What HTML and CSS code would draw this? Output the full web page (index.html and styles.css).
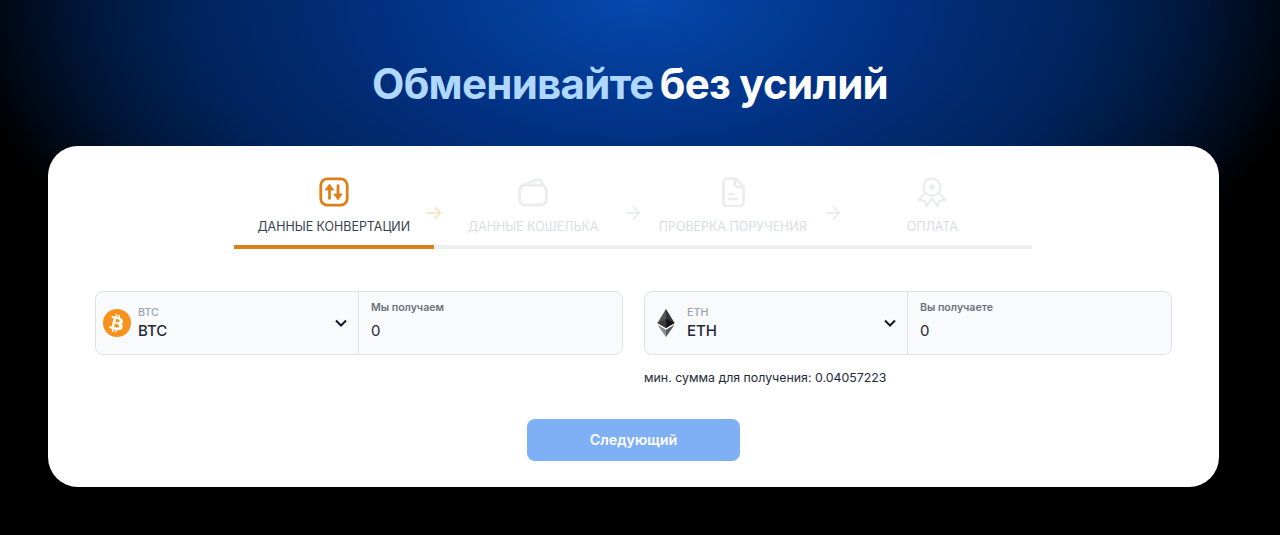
FILE: index.html
```html
<!DOCTYPE html>
<html lang="ru">
<head>
<meta charset="utf-8">
<title>Обменивайте без усилий</title>
<link rel="stylesheet" href="styles.css">
</head>
<body>
<main class="page">
  <h1 class="title"><span class="title-accent">Обменивайте</span> без усилий</h1>
  <section class="card">
    <ol class="steps">
      <li class="step step-active">
        <svg class="step-icon" viewBox="0 0 30 30" fill="none"><rect x="1.800" y="1.800" width="26.400" height="26.400" rx="6.500" stroke="#dc8119" stroke-width="2.800"/><path d="M10.500 22.500V12" stroke="#dc8119" stroke-width="2.800"/><path d="M10.500 7.200L14.600 13H6.400z" fill="#dc8119" stroke="#dc8119" stroke-linejoin="round"/><path d="M19 7.500V18" stroke="#dc8119" stroke-width="2.800"/><path d="M19 22.800L14.900 17h8.200z" fill="#dc8119" stroke="#dc8119" stroke-linejoin="round"/></svg>
        <span class="step-label">ДАННЫЕ КОНВЕРТАЦИИ</span>
        <svg class="step-arrow arrow-warm" viewBox="0 0 16 14" fill="none"><path d="M1 7h13.500M8.500 1l6 6-6 6" stroke="currentColor" stroke-width="1.400"/></svg>
      </li>
      <li class="step">
        <svg class="step-icon" viewBox="0 0 30 30" fill="none"><rect x="1.500" y="8" width="27" height="20" rx="6" stroke="#ebecee" stroke-width="2.800"/><path d="M2 13c0-3 1-4.500 4-5.300L18 3c3.500-1.200 6 .5 7 5" stroke="#ebecee" stroke-width="2.800"/></svg>
        <span class="step-label">ДАННЫЕ КОШЕЛЬКА</span>
        <svg class="step-arrow" viewBox="0 0 16 14" fill="none"><path d="M1 7h13.500M8.500 1l6 6-6 6" stroke="currentColor" stroke-width="1.400"/></svg>
      </li>
      <li class="step">
        <svg class="step-icon" viewBox="0 0 30 30" fill="none"><path d="M5.500 5.500a4 4 0 0 1 4-4h8l8 8.500v15.500a3.500 3.500 0 0 1-3.500 3.500H9a3.500 3.500 0 0 1-3.500-3.500z" stroke="#ebecee" stroke-width="2.600" stroke-linejoin="round"/><path d="M17 2v5a3 3 0 0 0 3 3h5.500M11 17h4M11 22h8" stroke="#ebecee" stroke-width="2.600" stroke-linecap="round"/></svg>
        <span class="step-label">ПРОВЕРКА ПОРУЧЕНИЯ</span>
        <svg class="step-arrow" viewBox="0 0 16 14" fill="none"><path d="M1 7h13.500M8.500 1l6 6-6 6" stroke="currentColor" stroke-width="1.400"/></svg>
      </li>
      <li class="step">
        <svg class="step-icon" viewBox="0 0 30 30" fill="none"><circle cx="15" cy="10" r="8.500" stroke="#ebecee" stroke-width="2.400"/><path d="M15 6.500l3.500 3.500-3.500 3.500-3.500-3.500z" fill="#ebecee"/><path d="M8.500 15.500l-7 7.500 6 1 2 5 5.500-7.500 5.500 7.500 2-5 6-1-7-7.500" stroke="#ebecee" stroke-width="2.400" stroke-linejoin="round"/></svg>
        <span class="step-label">ОПЛАТА</span>
      </li>
    </ol>

    <div class="fields">
      <div class="field-col">
        <div class="field">
          <div class="coin">
            <svg class="coin-icon" viewBox="0 0 28 28"><circle cx="14" cy="14" r="14" fill="#f7931a"/><path fill="#fff" d="M19.800 12.300c.3-1.900-1.200-2.900-3.200-3.600l.7-2.600-1.600-.4-.6 2.600-1.300-.3.600-2.600-1.600-.4-.7 2.600-1-.2-2.200-.6-.4 1.700s1.200.3 1.200.3c.7.2.8.600.8 1l-1.800 7.300c-.1.200-.3.500-.8.400 0 0-1.200-.3-1.200-.3l-.8 1.900 2.100.5 1.200.3-.7 2.700 1.600.4.700-2.600 1.300.3-.7 2.600 1.600.4.700-2.700c2.800.5 4.900.3 5.800-2.200.7-2-.1-3.200-1.500-4 1.100-.2 1.900-.9 2.100-2.400zm-3.700 5.200c-.5 2-3.900.9-5 .6l.9-3.600c1.100.3 4.600.8 4.100 3zm.5-5.200c-.5 1.800-3.300.9-4.200.7l.8-3.200c.9.200 3.900.6 3.400 2.500z"/></svg>
            <div class="coin-text"><span class="coin-small">BTC</span><span class="coin-big">BTC</span></div>
            <svg class="chevron" viewBox="0 0 14 10" fill="none"><path d="M2 2.500l5 5 5-5" stroke="#111827" stroke-width="2"/></svg>
          </div>
          <div class="amount"><span class="amount-label">Мы получаем</span><span class="amount-value">0</span></div>
        </div>
      </div>
      <div class="field-col">
        <div class="field">
          <div class="coin">
            <svg class="coin-icon" viewBox="0 0 28 28"><path fill="#343434" d="M14 0l-.2.600v18.300l.2.200 8.600-5.100z"/><path fill="#555" d="M14 0L5.400 14 14 19.100V0z"/><path fill="#5a5a5a" d="M14 20.800l-.1.100V27.700l.1.300 8.600-12.300z"/><path fill="#8c8c8c" d="M14 28v-7.200l-8.600-5.100z"/><path fill="#141414" d="M14 19.100l8.600-5.100-8.600-3.900z"/><path fill="#393939" d="M5.400 14l8.600 5.100v-9z"/></svg>
            <div class="coin-text"><span class="coin-small">ETH</span><span class="coin-big">ETH</span></div>
            <svg class="chevron" viewBox="0 0 14 10" fill="none"><path d="M2 2.500l5 5 5-5" stroke="#111827" stroke-width="2"/></svg>
          </div>
          <div class="amount"><span class="amount-label">Вы получаете</span><span class="amount-value">0</span></div>
        </div>
        <p class="hint">мин. сумма для получения: 0.04057223</p>
      </div>
    </div>

    <div class="actions"><button class="next" type="button">Следующий</button></div>
  </section>
</main>
</body>
</html>
```

FILE: styles.css
```css
* { box-sizing: border-box; }
html, body { margin: 0; height: 100%; }
body {
  background: #000;
  font-family: Inter, "Noto Sans", sans-serif;
  overflow: hidden;
}
.page {
  height: 535px;
  padding-top: 58px;
  background: radial-gradient(ellipse 680px 400px at 640px -5px, #0549b0 0%, #033c96 20%, #023080 38%, #00235a 67%, #001638 82%, #000814 94%, #000 100%);
}
.title {
  margin: 0;
  height: 88px;
  padding-right: 20px;
  text-align: center;
  font-size: 42px;
  line-height: 51px;
  font-weight: 700;
  letter-spacing: -0.73px;
  color: #fff;
}
.title-accent { margin-right: -3px; color: #b0d8fe; }
.card {
  width: 1171px;
  height: 341px;
  margin-left: 48px;
  padding-top: 31px;
  background: #fff;
  border-radius: 30px;
}
.steps {
  display: flex;
  width: 798px;
  margin: 0 0 0 186px;
  padding: 0;
  list-style: none;
}
.step {
  position: relative;
  flex: 1;
  height: 72px;
  display: flex;
  flex-direction: column;
  align-items: center;
  border-bottom: 4px solid #eeeff1;
}
.step-active { border-bottom-color: #dc8119; }
.step-icon { width: 30px; height: 30px; }
.step-label {
  margin-top: 11px;
  font-size: 12.450px;
  line-height: 18px;
  color: #dadde2;
  white-space: nowrap;
}
.step-active .step-label { color: #374151; }
.step-arrow {
  position: absolute;
  right: -8px;
  top: 29px;
  width: 16px;
  height: 14px;
  color: #e6e7ea;
}
.arrow-warm { color: #fbdcb4; }
.fields {
  display: flex;
  justify-content: space-between;
  width: 1077px;
  margin: 42px 0 0 47px;
}
.field-col { width: 528px; }
.field {
  display: flex;
  height: 64px;
  background: #f8fafc;
  border: 1px solid #dfe2e7;
  border-radius: 8px;
}
.coin {
  width: 263px;
  display: flex;
  align-items: center;
  padding: 0 10px 0 7px;
  border-right: 1px solid #dfe2e7;
}
.coin-icon { width: 28px; height: 28px; flex: none; }
.coin-text {
  display: flex;
  flex-direction: column;
  flex: 1;
  margin-left: 7px;
}
.coin-small { font-size: 10.700px; line-height: 12px; font-weight: 500; color: #9ca3af; }
.coin-big { margin-top: 3px; font-size: 15px; line-height: 18px; font-weight: 500; color: #1f2937; }
.chevron { width: 14px; height: 10px; flex: none; }
.amount {
  display: flex;
  flex-direction: column;
  flex: 1;
  padding: 9px 12px 0;
}
.amount-label { font-size: 10.600px; line-height: 14px; font-weight: 600; color: #6b7280; }
.amount-value { margin-top: 7px; font-size: 15px; line-height: 18px; color: #1f2937; }
.hint {
  margin: 14px 0 0;
  font-size: 12.360px;
  line-height: 18px;
  color: #1f2937;
}
.actions {
  display: flex;
  justify-content: center;
  margin-top: 32px;
}
.next {
  width: 213px;
  height: 42px;
  border: 0;
  border-radius: 8px;
  background: #7fb0f5;
  color: #fff;
  font: 600 14.300px/18px Inter, "Noto Sans", sans-serif;
}
```
